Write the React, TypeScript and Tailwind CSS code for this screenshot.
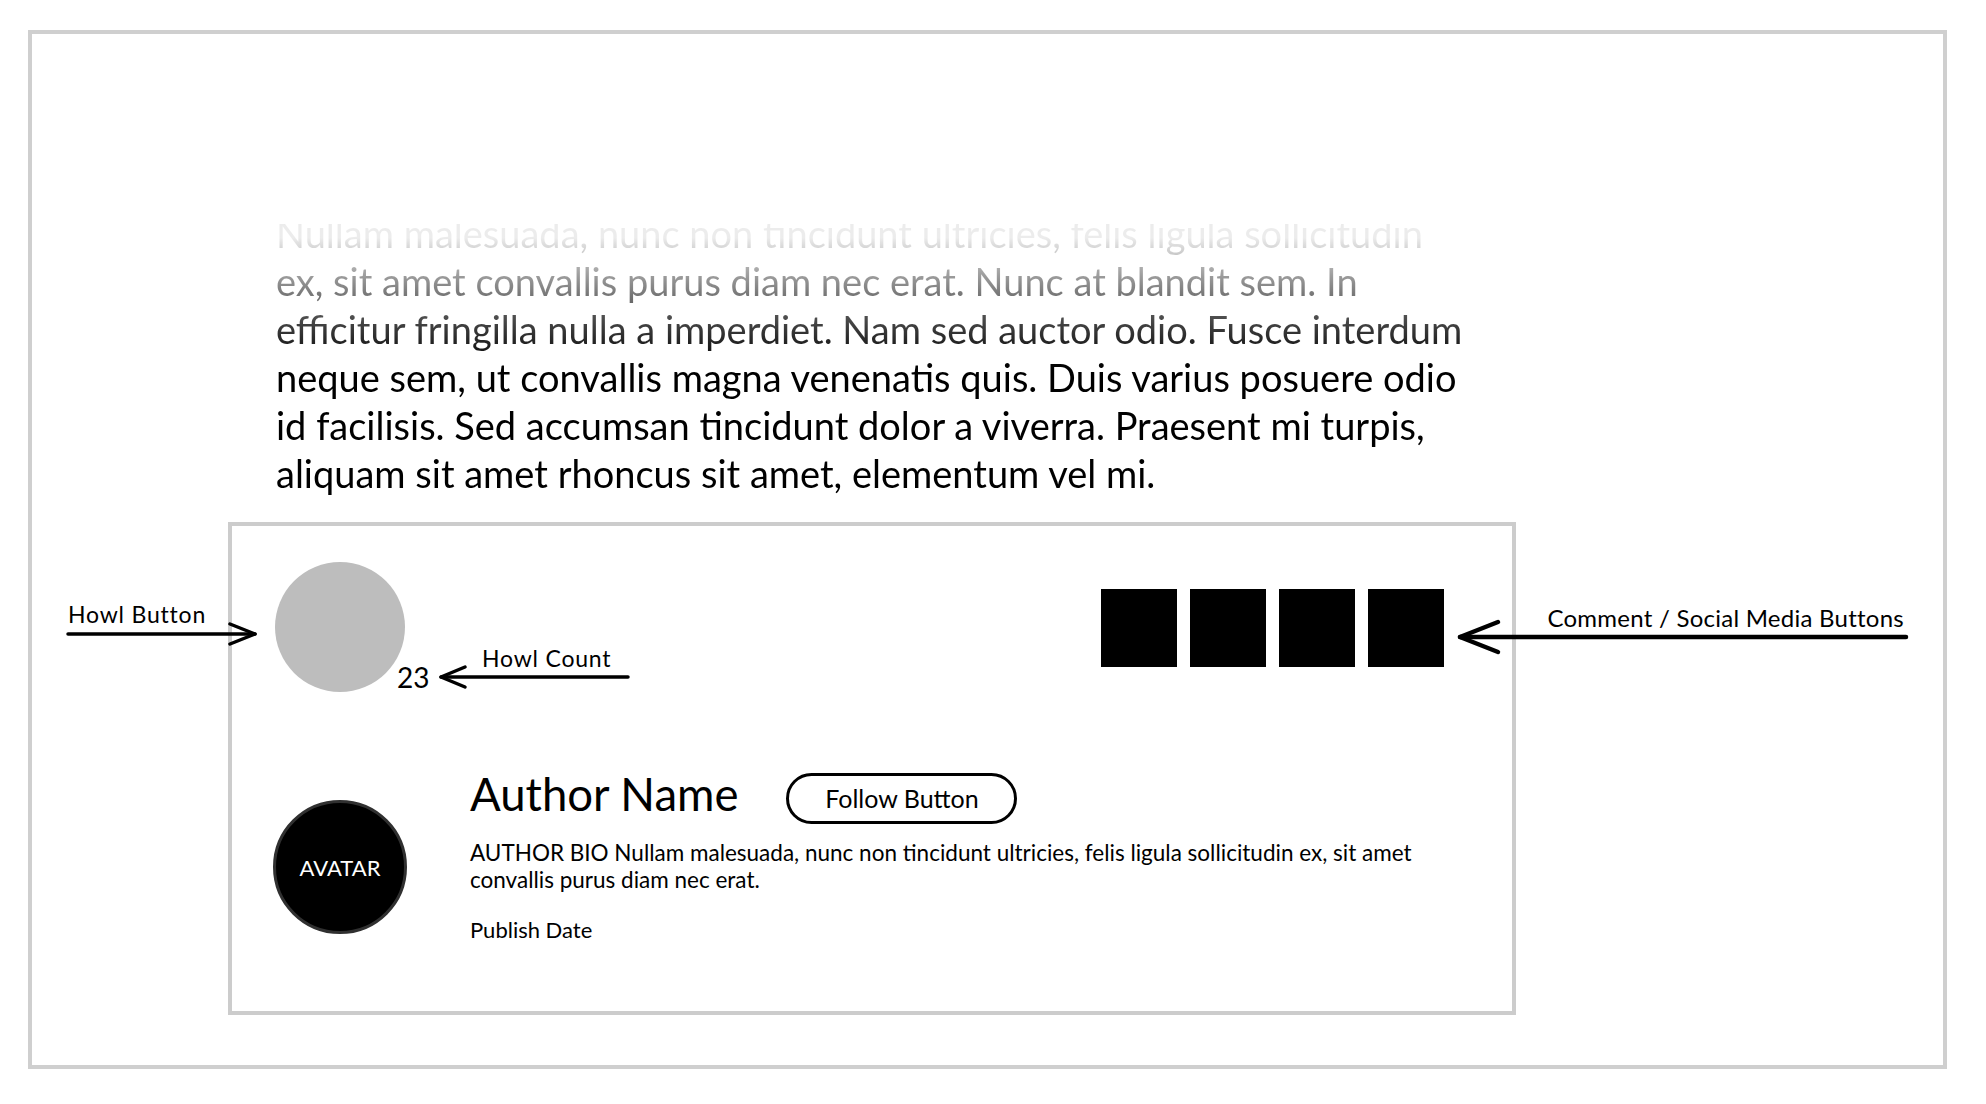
import React from 'react';

const articleLines = [
  'Nullam malesuada, nunc non tincidunt ultricies, felis ligula sollicitudin',
  'ex, sit amet convallis purus diam nec erat. Nunc at blandit sem. In',
  'efficitur fringilla nulla a imperdiet. Nam sed auctor odio. Fusce interdum',
  'neque sem, ut convallis magna venenatis quis. Duis varius posuere odio',
  'id facilisis. Sed accumsan tincidunt dolor a viverra. Praesent mi turpis,',
  'aliquam sit amet rhoncus sit amet, elementum vel mi.',
];

const socialButtons = ['comment', 'facebook', 'twitter', 'share'];

// wireframe callouts drawn over the mockup
const Annotations = () => (
  <>
    <span className="absolute left-[68px] top-[603px] text-[23px] leading-none tracking-[0.8px]">
      Howl Button
    </span>
    <svg
      className="absolute left-[64px] top-[620px]"
      width="198"
      height="28"
      viewBox="0 0 198 28"
      fill="none"
      stroke="black"
      strokeWidth="3.5"
      strokeLinecap="round"
      strokeLinejoin="round"
    >
      <line x1="4" y1="14" x2="191" y2="14" />
      <polyline points="166,4 191,14 166,24" />
    </svg>

    <span className="absolute left-[482px] top-[647px] text-[23px] leading-none tracking-[0.8px]">
      Howl Count
    </span>
    <svg
      className="absolute left-[436px] top-[663px]"
      width="196"
      height="28"
      viewBox="0 0 196 28"
      fill="none"
      stroke="black"
      strokeWidth="3.5"
      strokeLinecap="round"
      strokeLinejoin="round"
    >
      <line x1="5" y1="14" x2="192" y2="14" />
      <polyline points="29,4 5,14 29,24" />
    </svg>

    <span className="absolute right-[82px] top-[606px] text-[24px] leading-none tracking-[0.25px]">
      Comment / Social Media Buttons
    </span>
    <svg
      className="absolute left-[1454px] top-[619px]"
      width="460"
      height="36"
      viewBox="0 0 460 36"
      fill="none"
      stroke="black"
      strokeWidth="4.5"
      strokeLinecap="round"
      strokeLinejoin="round"
    >
      <line x1="6" y1="18" x2="452" y2="18" />
      <polyline points="44,3 6,18 44,33" />
    </svg>
  </>
);

const App = () => {
  return (
    <div className="relative w-[1986px] h-[1104px] bg-white pt-[30px] pl-[28px] font-['Lato',sans-serif] text-black">
      <div className="w-[1919px] h-[1039px] border-4 border-[#cfcfcf] pl-[196px] pt-[190px]">
        {/* faded article text */}
        <div className="ml-[48px] h-[275px] overflow-hidden">
          <p className="-mt-[15px] text-[38px] leading-[48px] whitespace-nowrap bg-linear-to-b from-[#ececec] from-10% to-black to-60% bg-clip-text text-transparent">
            {articleLines.map((line) => (
              <span key={line} className="block">
                {line}
              </span>
            ))}
          </p>
        </div>

        {/* post footer card */}
        <div className="mt-[23px] w-[1288px] h-[493px] border-4 border-[#cccccc] pt-[36px] pl-[41px] pr-[68px]">
          <div className="flex justify-between items-start">
            <div className="flex items-end">
              <button className="ml-[2px] size-[130px] rounded-full bg-[#bdbdbd]" aria-label="Howl" />
              <span className="-ml-[8px] mb-[1px] text-[28px] leading-none">23</span>
            </div>
            <div className="flex gap-[13px] mt-[27px]">
              {socialButtons.map((name) => (
                <button key={name} className="w-[76px] h-[78px] bg-black" aria-label={name} />
              ))}
            </div>
          </div>

          <div className="mt-[78px] flex items-start">
            <div className="mt-[30px] size-[134px] shrink-0 rounded-full bg-black border-[3px] border-[#303030] flex items-center justify-center text-white text-[22px]">
              AVATAR
            </div>
            <div className="ml-[63px]">
              <div className="flex items-start">
                <h2 className="mt-[1px] text-[45.5px] leading-none">Author Name</h2>
                <button className="ml-[48px] mt-[3px] h-[51px] w-[231px] rounded-full border-[3px] border-black text-[25px] leading-none flex items-center justify-center">
                  Follow Button
                </button>
              </div>
              <p className="mt-[15px] text-[22.5px] leading-[27px] whitespace-nowrap">
                AUTHOR BIO Nullam malesuada, nunc non tincidunt ultricies, felis ligula sollicitudin ex, sit amet
                <br />
                convallis purus diam nec erat.
              </p>
              <p className="mt-[23px] text-[22px] leading-[27px]">Publish Date</p>
            </div>
          </div>
        </div>
      </div>

      <Annotations />
    </div>
  );
};

export default App;
